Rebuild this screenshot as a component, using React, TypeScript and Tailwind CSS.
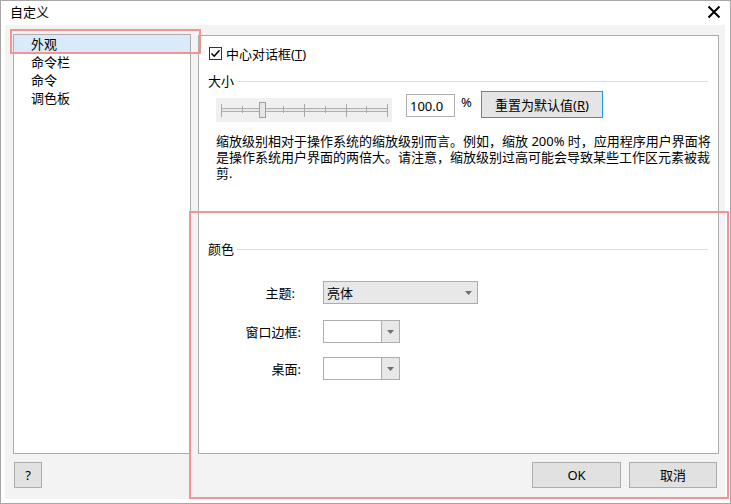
const FONT = "font-['Segoe_UI','Noto_Sans','Noto_Sans_CJK_SC',sans-serif]";

const TREE_ITEMS = ["外观", "命令栏", "命令", "调色板"];

function CloseIcon() {
  return (
    <svg width="14" height="14" viewBox="0 0 14 14">
      <path d="M1.5 1.5 L12.5 12.5 M12.5 1.5 L1.5 12.5" stroke="#000" strokeWidth="2" />
    </svg>
  );
}

function Arrow() {
  return (
    <svg width="7" height="4" viewBox="0 0 7 4">
      <path d="M0 0 H7 L3.5 4 Z" fill="#6f6f6f" />
    </svg>
  );
}

function Slider() {
  const ticks = Array.from({ length: 9 }, (_, i) => i);
  return (
    <div className="ml-[17px] mt-[7px] w-[176px] h-[24px] bg-[#f0f0f0]">
      <svg width="176" height="24" viewBox="0 0 176 24">
        <rect x="5.5" y="10.5" width="166" height="3" fill="#e8e8e8" stroke="#b0b0b0" />
        {ticks.map((i) => {
          const x = Math.round(5 + i * 20.75) + 0.5;
          const tall = i % 2 === 0;
          return (
            <line
              key={i}
              x1={x}
              x2={x}
              y1={tall ? 6 : 8}
              y2={tall ? 19 : 15}
              stroke="#a8a8a8"
            />
          );
        })}
        <rect x="43.5" y="4.5" width="6" height="15" fill="#e6e6e6" stroke="#9f9f9f" />
      </svg>
    </div>
  );
}

function SectionHeader({ label }: { label: string }) {
  return (
    <div className="ml-[9px] mr-[10px] h-[16px] flex items-center">
      <span className="leading-[16px]">{label}</span>
      <div className="flex-1 ml-[3px] h-px bg-[#dcdcdc]" />
    </div>
  );
}

function Combo() {
  return (
    <div className="w-[77px] h-[23px] border border-[#adadad] flex bg-white">
      <div className="flex-1" />
      <div className="w-[18px] border-l border-[#adadad] bg-[#e8e8e8] flex items-center justify-center">
        <Arrow />
      </div>
    </div>
  );
}

function FormRow({
  label,
  labelPad,
  children,
}: {
  label: string;
  labelPad?: string;
  children: React.ReactNode;
}) {
  return (
    <div className="flex items-center h-[23px]">
      <div className={`w-[102px] text-right leading-[16px] ${labelPad ?? ""}`}>{label}</div>
      <div className="ml-[22px]">{children}</div>
    </div>
  );
}

function Button({ className, children }: { className: string; children: React.ReactNode }) {
  return (
    <button
      type="button"
      className={`h-[26px] border border-[#adadad] bg-[#e1e1e1] flex items-center justify-center leading-[16px] ${className}`}
    >
      {children}
    </button>
  );
}

export default function App() {
  return (
    <div
      className={`relative w-[731px] h-[504px] border border-[#a7a7a7] bg-white text-[13px] text-black overflow-hidden ${FONT}`}
    >
      {/* title bar */}
      <div className="h-[24px] flex items-center justify-between pl-[9px] pr-[9px]">
        <span className="leading-[16px] -mt-[2px]">自定义</span>
        <span className="-mt-[3px]">
          <CloseIcon />
        </span>
      </div>

      <div className="mx-[4px] w-[720px] h-[474px] bg-[#f3f3f3]">
        <div className="flex h-[429px]">
          {/* tree */}
          <div className="ml-[8px] mt-[9px] w-[178px] h-[420px] border border-[#acacac] bg-white">
            {TREE_ITEMS.map((item, i) => (
              <div
                key={item}
                className={`h-[18px] leading-[18px] pl-[17px] ${i === 0 ? "bg-[#dbeafb]" : ""}`}
              >
                {item}
              </div>
            ))}
          </div>

          {/* settings panel */}
          <div className="ml-[7px] mt-[10px] w-[521px] h-[419px] border border-[#acacac] bg-white flex flex-col">
            <div className="mt-[11px] ml-[10px] h-[13px] flex items-center">
              <div className="w-[13px] h-[13px] border border-[#333] bg-white flex items-center justify-center">
                <svg width="11" height="11" viewBox="0 0 11 11">
                  <path d="M1.5 5.5 L4.2 8.2 L9.5 2.2" fill="none" stroke="#000" strokeWidth="1.6" />
                </svg>
              </div>
              <span className="ml-[4px] leading-[16px]">
                中心对话框(<span className="underline">T</span>)
              </span>
            </div>

            <div className="mt-[13px]">
              <SectionHeader label="大小" />
            </div>

            <div className="mt-[2px] h-[27px] flex items-start">
              <Slider />
              <div className="ml-[14px] mt-[3px] w-[49px] h-[23px] border border-[#adadad] bg-white pl-[3px] flex items-center leading-[16px]">
                100.0
              </div>
              <span className="ml-[6px] w-[14px] mt-[3px] leading-[16px]">%</span>
              <button
                type="button"
                className="ml-[6px] w-[122px] h-[27px] border border-[#1e9be6] bg-[#e5e5e5] flex items-center justify-center leading-[16px]"
              >
                重置为默认值(<span className="underline">R</span>)
              </button>
            </div>

            <p className="mt-[15px] ml-[17px] leading-[16px] whitespace-nowrap">
              缩放级别相对于操作系统的缩放级别而言。例如，缩放 200% 时，应用程序用户界面将
              <br />
              是操作系统用户界面的两倍大。请注意，缩放级别过高可能会导致某些工作区元素被裁
              <br />
              剪.
            </p>

            <div className="mt-[60px]">
              <SectionHeader label="颜色" />
            </div>

            <div className="mt-[24px]">
              <FormRow label="主题:" labelPad="pr-[6px]">
                <div className="w-[155px] h-[23px] border border-[#adadad] bg-[#e8e8e8] flex items-center justify-between pl-[3px] pr-[5px] leading-[16px]">
                  <span>亮体</span>
                  <Arrow />
                </div>
              </FormRow>
            </div>
            <div className="mt-[16px]">
              <FormRow label="窗口边框:">
                <Combo />
              </FormRow>
            </div>
            <div className="mt-[14px]">
              <FormRow label="桌面:">
                <Combo />
              </FormRow>
            </div>
          </div>
        </div>

        {/* bottom buttons */}
        <div className="mt-[8px] flex">
          <Button className="ml-[9px] w-[28px]">?</Button>
          <Button className="ml-auto w-[89px]">OK</Button>
          <Button className="ml-[8px] mr-[8px] w-[88px]">取消</Button>
        </div>
      </div>

      {/* red annotation frames */}
      <div className="pointer-events-none absolute left-[9px] top-[28px] w-[191px] h-[25px] border-2 border-[#f39494]" />
      <div className="pointer-events-none absolute left-[188px] top-[210px] w-[540px] h-[288px] border-2 border-[#f39494]" />
    </div>
  );
}
